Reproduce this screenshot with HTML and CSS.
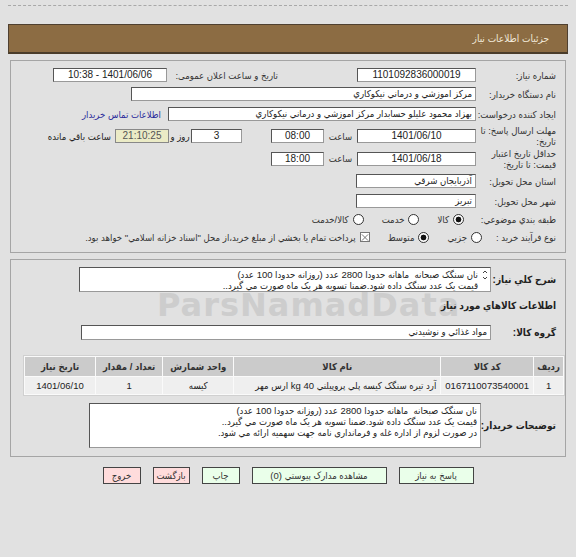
FILE: index.html
```html
<!DOCTYPE html>
<html lang="fa" dir="rtl">
<head>
<meta charset="utf-8">
<title>جزئيات اطلاعات نياز</title>
<link rel="stylesheet" href="styles.css">
</head>
<body>
<div class="topline"></div>
<div class="header">جزئيات اطلاعات نياز</div>

<div class="box box1">
  <div class="row r1">
    <div class="lbl">شماره نياز:</div>
    <div class="fld w119 c">1101092836000019</div>
    <div class="lbl2">تاريخ و ساعت اعلان عمومی:</div>
    <div class="fld w114 c ml4">1401/06/06 - 10:38</div>
  </div>
  <div class="row r2">
    <div class="lbl">نام دستگاه خريدار:</div>
    <div class="fld w345">مرکز اموزشي و درماني نيکوکاري</div>
  </div>
  <div class="row r3">
    <div class="lbl">ايجاد کننده درخواست:</div>
    <div class="fld w308">بهزاد محمود عليلو حسابدار مرکز اموزشي و درماني نيکوکاري</div>
    <a class="link">اطلاعات تماس خريدار</a>
  </div>
  <div class="row r4">
    <div class="lbl two">مهلت ارسال پاسخ: تا تاريخ:</div>
    <div class="fld w119 c">1401/06/10</div>
    <div class="sa">ساعت</div>
    <div class="fld w53 c">08:00</div>
    <div class="fld w51 c mr29">3</div>
    <div class="ruz">روز و</div>
    <div class="fld w54 c yellow">21:10:25</div>
    <div class="rem">ساعت باقي مانده</div>
  </div>
  <div class="row r5">
    <div class="lbl two">حداقل تاريخ اعتبار قيمت: تا تاريخ:</div>
    <div class="fld w119 c">1401/06/18</div>
    <div class="sa">ساعت</div>
    <div class="fld w53 c">18:00</div>
  </div>
  <div class="row r6">
    <div class="lbl">استان محل تحويل:</div>
    <div class="fld w120">آذربايجان شرقي</div>
  </div>
  <div class="row r7">
    <div class="lbl">شهر محل تحويل:</div>
    <div class="fld w120">تبريز</div>
  </div>
  <div class="row r8">
    <div class="lbl">طبقه بندي موضوعي:</div>
    <span class="radio on first"></span><span class="opt">کالا</span>
    <span class="radio"></span><span class="opt">خدمت</span>
    <span class="radio"></span><span class="opt">کالا/خدمت</span>
  </div>
  <div class="row r9">
    <div class="lbl9">نوع فرآيند خريد :</div>
    <span class="radio"></span><span class="opt">جزيي</span>
    <span class="radio on"></span><span class="opt">متوسط</span>
    <span class="check"><svg width="9" height="9" viewBox="0 0 9 9"><path d="M1 1L8 8M8 1L1 8" stroke="#666" stroke-width="1"/></svg></span>
    <span class="opt">پرداخت تمام يا بخشي از مبلغ خريد،از محل "اسناد خزانه اسلامي" خواهد بود.</span>
  </div>
</div>

<div class="box box2">
  <div class="row ra">
    <div class="blbl wa">شرح کلي نياز:</div>
    <div class="area a1">
      <svg class="arrows" width="6" height="10" viewBox="0 0 6 10"><path d="M1 3L3 1L5 3M1 7L3 9L5 7" fill="none" stroke="#444" stroke-width="1"/></svg>
      <div>نان سنگک صبحانه &nbsp;ماهانه حدودا 2800 عدد (روزانه حدودا 100 عدد)</div>
      <div>قيمت يک عدد سنگک داده شود.ضمنا تسويه هر يک ماه صورت مي گيرد..</div>
    </div>
  </div>
  <div class="row rb">
    <div class="blbl">اطلاعات کالاهاي مورد نياز</div>
  </div>
  <div class="row rc">
    <div class="blbl wa">گروه کالا:</div>
    <div class="fld w410">مواد غذائي و نوشيدني</div>
  </div>
  <table class="items">
    <thead>
      <tr>
        <th class="c1">رديف</th>
        <th class="c2">کد کالا</th>
        <th class="c3">نام کالا</th>
        <th class="c4">واحد شمارش</th>
        <th class="c5">تعداد / مقدار</th>
        <th class="c6">تاريخ نياز</th>
      </tr>
    </thead>
    <tbody>
      <tr>
        <td>1</td>
        <td>0167110073540001</td>
        <td>آرد تيره سنگک کيسه پلي پروپيلني 40 kg ارس مهر</td>
        <td>کيسه</td>
        <td>1</td>
        <td>1401/06/10</td>
      </tr>
    </tbody>
  </table>
  <div class="row re">
    <div class="blbl we">توضيحات خريدار:</div>
    <div class="area a2">
      <div>نان سنگک صبحانه &nbsp;ماهانه حدودا 2800 عدد (روزانه حدودا 100 عدد)</div>
      <div>قيمت يک عدد سنگک داده شود.ضمنا تسويه هر يک ماه صورت مي گيرد..</div>
      <div>در صورت لزوم از اداره غله و فرمانداری نامه جهت سهميه ارائه مي شود.</div>
    </div>
  </div>
</div>

<div class="buttons">
  <span class="btn green b1">پاسخ به نياز</span>
  <span class="btn green b2">مشاهده مدارک پيوستي (0)</span>
  <span class="btn green b3">چاپ</span>
  <span class="btn pink b4">بازگشت</span>
  <span class="btn pink b5">خروج</span>
</div>

<div class="watermark">ParsNamadData</div>
</body>
</html>
```

FILE: styles.css
```css
* { box-sizing: border-box; }
html, body { margin: 0; padding: 0; background: #e1e1e1; }
body {
  font-family: "Liberation Sans", "DejaVu Sans Condensed", "DejaVu Sans", sans-serif;
  font-size: 9.5px;
  color: #222;
  direction: rtl;
  position: relative;
  width: 576px;
  height: 557px;
  overflow: hidden;
}
.topline { margin: 5px 8px 0; border-top: 1px dashed #a8a8a8; }
.header {
  margin: 18px 8px 0;
  height: 30px;
  background: #8c6c43;
  border: 1px solid #4f4030;
  border-bottom: 2px solid #4a3c2a;
  color: #f1e9da;
  font-size: 10px;
  padding-right: 18px;
  display: flex;
  align-items: center;
}
.box {
  margin: 6px 10px 0;
  border: 1px solid #a5a5a5;
  padding: 5px 9px 7px 8px;
  position: relative;
  z-index: 1;
}
.row { display: flex; align-items: center; }
.r1 { height: 18px; }
.r2 { height: 20px; }
.r3 { height: 20px; }
.r4 { height: 24px; }
.r5 { height: 21px; }
.r6 { height: 24px; }
.r7 { height: 16px; }
.r8 { height: 20px; }
.r9 { height: 16px; }
.lbl { width: 80px; flex: none; color: #333; white-space: nowrap; }
.lbl.two { white-space: normal; line-height: 11px; }
.lbl2 { width: 107px; margin-right: 79px; flex: none; white-space: nowrap; color: #333; }
.lbl9 { width: 62px; flex: none; white-space: nowrap; color: #333; margin-left: 12px; }
.fld {
  height: 14px;
  background: #fff;
  border: 1px solid #555;
  border-right-color: #999;
  border-bottom-color: #999;
  line-height: 12px;
  padding: 0 3px;
  white-space: nowrap;
  overflow: hidden;
  flex: none;
  color: #222;
}
.fld.c { text-align: center; font-size: 10px; }
.w119 { width: 119px; }
.w120 { width: 120px; }
.w114 { width: 114px; }
.w345 { width: 345px; }
.w308 { width: 308px; }
.w53 { width: 53px; }
.w51 { width: 51px; }
.w54 { width: 54px; }
.w410 { width: 410px; height: 15px; }
.ml4 { margin-right: 4px; }
.mr29 { margin-right: 29px; }
.yellow { background: #ebebc6; color: #555; border-color: #888; }
.link { color: #2b2b9b; margin-right: 7px; white-space: nowrap; }
.sa { width: 33px; text-align: center; flex: none; color: #333; }
.ruz { width: 22px; text-align: center; flex: none; white-space: nowrap; }
.rem { margin-right: 4px; white-space: nowrap; }
.radio {
  width: 11px; height: 11px;
  border: 1px solid #333;
  border-radius: 50%;
  background: #fff;
  flex: none;
}
.radio.on { background: radial-gradient(circle, #111 0 2.6px, #fff 3.2px); }
.radio.first { margin-right: 12px; }
.opt { margin-right: 4px; margin-left: 18px; white-space: nowrap; color: #333; }
.check {
  width: 10px; height: 10px;
  border: 1px solid #777;
  background: #fff;
  display: flex;
  flex: none;
}
.check svg { display: block; }
.r9 .opt:last-child { margin-left: 0; }

.box2 { padding: 6px 9px 8px 0; }
.blbl { font-weight: bold; font-size: 10px; color: #222; white-space: nowrap; flex: none; }
.wa { width: 65px; }
.we { width: 75px; }
.ra { height: 27px; }
.rb { height: 19px; margin-top: 3px; }
.rc { height: 16px; margin-top: 9px; }
.area {
  background: #fff;
  border: 1px solid #555;
  border-right-color: #999;
  border-bottom-color: #999;
  line-height: 11px;
  padding: 1px 12px 0 4px;
  color: #222;
  position: relative;
  flex: none;
  white-space: nowrap;
  overflow: hidden;
}
.a1 { width: 412px; height: 25px; }
.a2 { width: 392px; height: 45px; padding: 1px 3px 0 4px; }
.arrows { position: absolute; right: 2px; top: 2px; }
.items {
  margin: 15px -9px 0 0;
  width: 542px;
  border-collapse: separate;
  border-spacing: 1px;
  background: #fafafa;
  border: 1px solid #d0d0d0;
  font-size: 9.5px;
}
.items th {
  background: #cbcbcb;
  height: 19px;
  font-weight: bold;
  color: #333;
  padding: 0;
  white-space: nowrap;
}
.items td {
  background: #efefef;
  height: 17px;
  text-align: center;
  padding: 0 4px;
  color: #222;
  white-space: nowrap;
}
.items td:nth-child(3) { text-align: right; }
.c1 { width: 31px; }
.c2 { width: 78px; }
.c3 { width: 212px; }
.c4 { width: 75px; }
.c5 { width: 71px; }
.c6 { width: 75px; }
.re { margin-top: 7px; height: 45px; }

.buttons {
  display: flex;
  justify-content: center;
  gap: 12px;
  margin-top: 10px;
}
.btn {
  height: 17px;
  border: 1px solid #444;
  display: flex;
  align-items: center;
  justify-content: center;
  color: #333;
  font-size: 9.5px;
  white-space: nowrap;
}
.green { background: #eaffea; }
.pink { background: #ffdcdc; }
.b1 { width: 75px; }
.b2 { width: 135px; }
.b3 { width: 38px; }
.b4 { width: 37px; }
.b5 { width: 38px; }

.watermark {
  position: absolute;
  left: 157px;
  top: 286px;
  font-family: "DejaVu Sans", sans-serif;
  font-weight: bold;
  font-size: 32px;
  color: #cdcdcd;
  direction: ltr;
  z-index: 0;
  letter-spacing: 1px;
}
```
